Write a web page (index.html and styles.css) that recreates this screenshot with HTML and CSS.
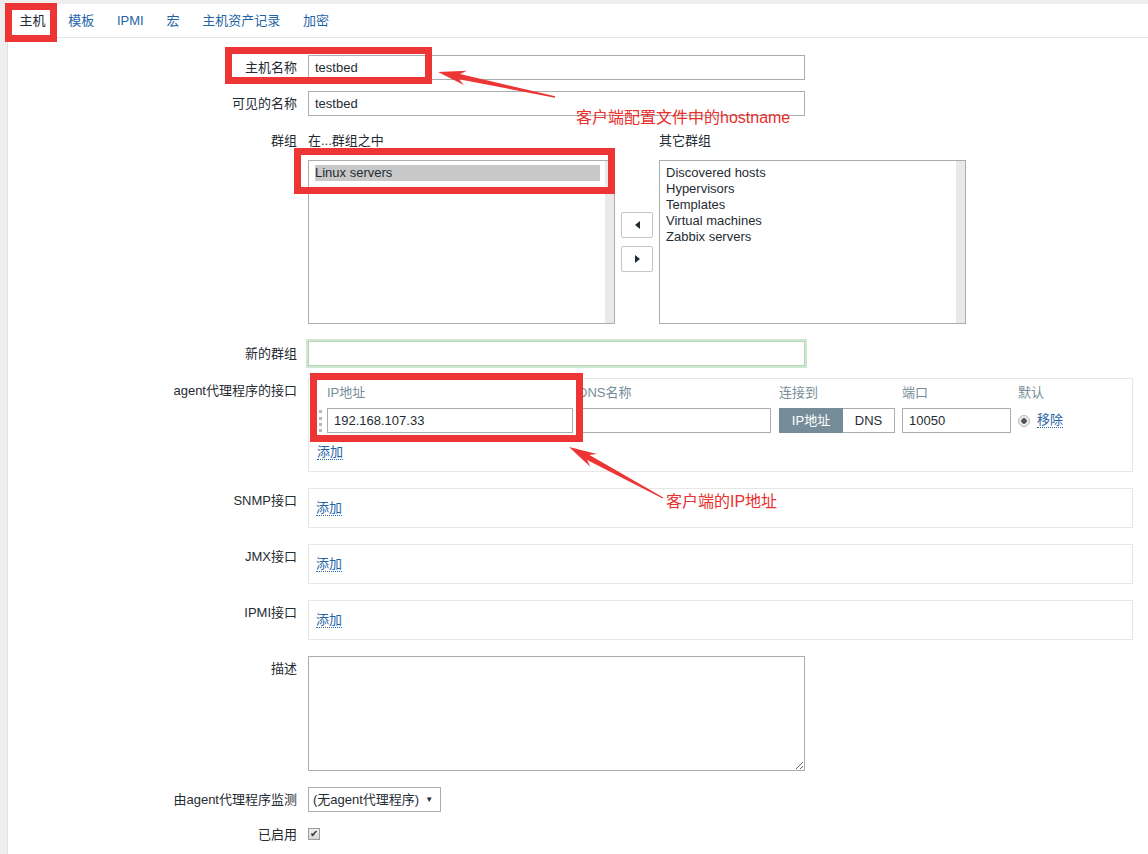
FILE: index.html
```html
<!DOCTYPE html>
<html lang="zh-CN">
<head>
<meta charset="utf-8">
<title>主机</title>
<link rel="stylesheet" href="styles.css">
</head>
<body>
<div class="page">
  <div class="tabs">
    <span class="tab active">主机</span>
    <span class="tab">模板</span>
    <span class="tab">IPMI</span>
    <span class="tab">宏</span>
    <span class="tab">主机资产记录</span>
    <span class="tab">加密</span>
  </div>

  <div class="form">
    <div class="row r-host">
      <div class="label">主机名称</div>
      <div class="field"><input class="input wide" type="text" value="testbed"></div>
    </div>
    <div class="row r-visible">
      <div class="label">可见的名称</div>
      <div class="field"><input class="input wide" type="text" value="testbed"></div>
    </div>
    <div class="row r-groups">
      <div class="label">群组</div>
      <div class="field">
        <div class="grp-head">
          <div class="grp-in">在...群组之中</div>
          <div>其它群组</div>
        </div>
        <div class="grp-body">
          <div class="listbox">
            <div class="items">
              <div class="item selected">Linux servers</div>
            </div>
            <div class="track"></div>
          </div>
          <div class="movers">
            <div class="mbtn"><span class="tri-left"></span></div>
            <div class="mbtn"><span class="tri-right"></span></div>
          </div>
          <div class="listbox">
            <div class="items">
              <div class="item">Discovered hosts</div>
              <div class="item">Hypervisors</div>
              <div class="item">Templates</div>
              <div class="item">Virtual machines</div>
              <div class="item">Zabbix servers</div>
            </div>
            <div class="track"></div>
          </div>
        </div>
      </div>
    </div>
    <div class="row r-newgroup">
      <div class="label">新的群组</div>
      <div class="field"><input class="input wide focus" type="text" value=""></div>
    </div>
    <div class="row r-box">
      <div class="label">agent代理程序的接口</div>
      <div class="field">
        <div class="iface">
          <div class="iface-grid">
            <div></div>
            <div class="ih">IP地址</div>
            <div class="ih">DNS名称</div>
            <div class="ih">连接到</div>
            <div class="ih">端口</div>
            <div class="ih">默认</div>
            <div><div class="handle"></div></div>
            <div><input class="input ip" type="text" value="192.168.107.33"></div>
            <div><input class="input dns" type="text" value=""></div>
            <div class="toggle"><span class="tbtn on">IP地址</span><span class="tbtn off">DNS</span></div>
            <div><input class="input port" type="text" value="10050"></div>
            <div class="dflt"><span class="radio"></span><span class="link">移除</span></div>
          </div>
          <div class="add"><span class="link">添加</span></div>
        </div>
      </div>
    </div>
    <div class="row r-box">
      <div class="label">SNMP接口</div>
      <div class="field"><div class="ibox"><span class="link">添加</span></div></div>
    </div>
    <div class="row r-box">
      <div class="label">JMX接口</div>
      <div class="field"><div class="ibox"><span class="link">添加</span></div></div>
    </div>
    <div class="row r-box">
      <div class="label">IPMI接口</div>
      <div class="field"><div class="ibox"><span class="link">添加</span></div></div>
    </div>
    <div class="row r-box">
      <div class="label">描述</div>
      <div class="field"><textarea class="desc"></textarea></div>
    </div>
    <div class="row r-proxy">
      <div class="label">由agent代理程序监测</div>
      <div class="field"><div class="select">(无agent代理程序)<span class="caret">▼</span></div></div>
    </div>
    <div class="row">
      <div class="label">已启用</div>
      <div class="field"><span class="check">✔</span></div>
    </div>
  </div>
</div>

<div class="annot">
  <div class="rbox b-tab"></div>
  <div class="rbox b-host"></div>
  <div class="rbox b-linux"></div>
  <div class="rbox b-ip"></div>
  <svg class="arrows" width="1148" height="854" viewBox="0 0 1148 854">
    <polygon fill="#ee3535" points="555.1,96.3 460.0,74.0 466.9,70.8 438,72 463.9,85.0 459.0,79.2 554.9,97.7"/>
    <polygon fill="#ee3535" points="663.3,497.4 589.5,455.1 596.9,454.0 569,447 590.3,466.8 587.1,459.9 662.7,498.6"/>
  </svg>
  <div class="note n-host">客户端配置文件中的hostname</div>
  <div class="note n-ip">客户端的IP地址</div>
</div>
</body>
</html>
```

FILE: styles.css
```css
* { box-sizing: border-box; }

body {
  margin: 0;
  background: #efefef;
  font-family: "Liberation Sans", "Noto Sans CJK SC", sans-serif;
  font-size: 13px;
  color: #1f2c33;
  position: relative;
  height: 854px;
  overflow: hidden;
}

.page {
  margin: 4px 0 0 7px;
  background: #fff;
  border-left: 1px solid #e2e2e2;
  height: 850px;
}

.tabs {
  display: flex;
  align-items: center;
  height: 34px;
  border-bottom: 1px solid #e4e4e4;
}
.tab {
  padding: 0 11.4px;
  color: #1f65a6;
  line-height: 20px;
}
.tab.active { color: #1f2c33; }

.form { padding-top: 17px; }

.row { display: flex; align-items: flex-start; }
.r-host { margin-bottom: 11px; }
.r-visible { margin-bottom: 12px; }
.r-groups { margin-bottom: 17px; }
.r-newgroup { margin-bottom: 12px; }
.r-box { margin-bottom: 16px; }
.r-proxy { margin-bottom: 10px; }

.label {
  width: 300px;
  flex: none;
  padding-right: 11px;
  text-align: right;
  line-height: 25px;
  white-space: nowrap;
}
.field { flex: 1; }

.input {
  display: block;
  height: 25px;
  border: 1px solid #acacac;
  padding: 0 6px;
  font: inherit;
  color: inherit;
  background: #fff;
  outline: none;
}
.wide { width: 497px; }
.focus {
  border-color: #b3d4b3;
  box-shadow: 0 0 0 2px #cfe7cf;
}

/* groups */
.grp-head { display: flex; line-height: 25px; height: 25px; }
.grp-in { width: 351px; }
.grp-body { display: flex; align-items: center; gap: 6px; margin-top: 7px; }
.listbox {
  display: flex;
  width: 307px;
  height: 164px;
  border: 1px solid #acacac;
  background: #fff;
}
.items { flex: 1; padding: 4px 5px 0 6px; }
.item { line-height: 16px; white-space: nowrap; }
.item.selected { background: #c8c8c8; }
.track { width: 9px; background: #e9e9e9; }

.movers { display: flex; flex-direction: column; gap: 8px; }
.mbtn {
  width: 32px;
  height: 26px;
  border: 1px solid #c4c4c4;
  border-radius: 2px;
  background: #fff;
  display: flex;
  align-items: center;
  justify-content: center;
}
.tri-left {
  width: 0; height: 0;
  border-top: 4px solid transparent;
  border-bottom: 4px solid transparent;
  border-right: 5px solid #1f2c33;
}
.tri-right {
  width: 0; height: 0;
  border-top: 4px solid transparent;
  border-bottom: 4px solid transparent;
  border-left: 5px solid #1f2c33;
}

/* interfaces */
.iface {
  width: 825px;
  border: 1px solid #e6e6e6;
  padding: 5px 7px 10px;
}
.iface-grid {
  display: grid;
  grid-template-columns: 11px 251px 201px 123px 116px 1fr;
  row-gap: 6px;
}
.ih { color: #768d99; line-height: 18px; white-space: nowrap; }
.handle {
  margin: 2px 0 0 3px;
  width: 3px;
  height: 22px;
  border-left: 3px dotted #b8b8b8;
}
.ip { width: 246px; }
.dns { width: 193px; }
.port { width: 109px; }
.toggle { display: flex; height: 25px; }
.tbtn {
  height: 25px;
  line-height: 23px;
  text-align: center;
  border: 1px solid #acacac;
}
.tbtn.on { width: 64px; background: #768d99; border-color: #768d99; color: #fff; }
.tbtn.off { width: 52px; border-left: none; background: #fff; }
.dflt { display: flex; align-items: center; height: 25px; }
.radio {
  width: 12px;
  height: 12px;
  border-radius: 50%;
  border: 1px solid #b8b8b8;
  background: radial-gradient(circle, #555 0 2.5px, #ececec 3px);
  margin-right: 7px;
}
.link {
  color: #1f65a6;
  border-bottom: 1px dotted #1f65a6;
  line-height: 14px;
}
.add { margin-top: 10px; line-height: 18px; padding-left: 1px; }

.ibox {
  width: 825px;
  height: 40px;
  border: 1px solid #e6e6e6;
  padding: 10px 7px;
  line-height: 18px;
}

.desc {
  display: block;
  width: 497px;
  height: 115px;
  border: 1px solid #acacac;
  font: inherit;
  resize: both;
  outline: none;
}

.select {
  width: 133px;
  height: 25px;
  border: 1px solid #acacac;
  padding: 0 0 0 4px;
  line-height: 23px;
  white-space: nowrap;
  display: flex;
}
.caret { font-size: 8px; margin-left: 6px; }

.check {
  display: inline-block;
  width: 12px;
  height: 12px;
  margin-top: 6px;
  border: 1px solid #9c9c9c;
  background: linear-gradient(#f0f0f0, #d8d8d8);
  font-size: 10px;
  line-height: 10px;
  text-align: center;
  color: #333;
}

/* annotations */
.annot { position: absolute; left: 0; top: 0; width: 1148px; height: 854px; pointer-events: none; }
.arrows { position: absolute; left: 0; top: 0; }
.rbox { position: absolute; border: 7px solid #ee3535; }
.b-tab { left: 5px; top: 3px; width: 52px; height: 39px; }
.b-host { left: 225px; top: 47px; width: 207px; height: 37px; }
.b-linux { left: 294px; top: 148px; width: 321px; height: 46px; }
.b-ip { left: 310px; top: 373px; width: 273px; height: 69px; }
.note {
  position: absolute;
  color: #e8302e;
  font-size: 16px;
  line-height: 20px;
  white-space: nowrap;
}
.n-host { left: 576px; top: 108px; }
.n-ip { left: 666px; top: 492px; }
```
